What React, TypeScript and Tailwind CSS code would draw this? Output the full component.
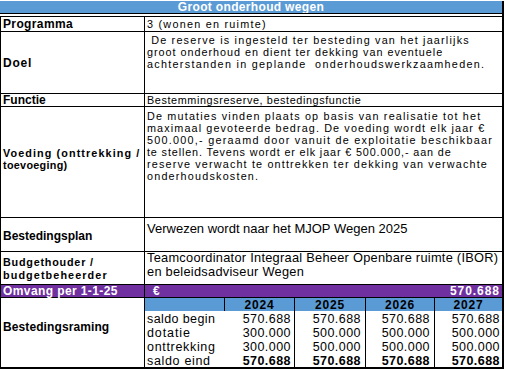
import React from "react";

const rows = [
  { label: "saldo begin", lt: "tracking-[0.4px]", vals: ["570.688", "570.688", "570.688", "570.688"], bold: false },
  { label: "dotatie", lt: "tracking-[0.9px]", vals: ["300.000", "500.000", "500.000", "500.000"], bold: false },
  { label: "onttrekking", lt: "tracking-[0.68px]", vals: ["300.000", "500.000", "500.000", "500.000"], bold: false },
  { label: "saldo eind", lt: "tracking-[0.67px]", vals: ["570.688", "570.688", "570.688", "570.688"], bold: true },
];

export default function App() {
  return (
    <div className="w-[505px] h-[371px] bg-white font-['Liberation_Sans',Arial,sans-serif] text-black overflow-hidden">
      <div className="w-[504px] flex flex-col">
        <div className="h-px" />
        <div className="h-[12px] bg-[#5b9bd5] border-r-2 border-black flex items-center justify-center text-white font-bold text-[12px] leading-[12px] tracking-[0.33px]">
          Groot onderhoud wegen
        </div>
        <div className="h-px bg-black" />
        <div className="h-[2px] bg-white border-r-2 border-black" />
        <div className="h-px bg-black" />

        <div className="flex flex-col border-l border-r-2 border-b-2 border-black">
          {/* Programma */}
          <div className="flex h-[15px] border-b border-black">
            <div className="w-[144px] border-r border-black flex items-center pl-[2px] font-bold text-[12px] leading-[12px] tracking-[0.37px]">
              Programma
            </div>
            <div className="flex-1 flex items-center pl-[2px] text-[10.8px] leading-[12px] tracking-[1.25px] whitespace-nowrap">
              3 (wonen en ruimte)
            </div>
          </div>

          {/* Doel */}
          <div className="flex h-[62px] border-b border-black">
            <div className="w-[144px] border-r border-black flex items-center pl-[2px] font-bold text-[12px] leading-[12px] tracking-[0.8px]">
              Doel
            </div>
            <div className="flex-1 flex flex-col pt-[2px] pl-[2px] text-[10.8px] leading-[12.1px] whitespace-pre">
              <span className="tracking-[1.2px]"> De reserve is ingesteld ter besteding van het jaarlijks</span>
              <span className="tracking-[0.99px]">groot onderhoud en dient ter dekking van eventuele</span>
              <span className="tracking-[1.29px]">achterstanden in geplande  onderhoudswerkzaamheden.</span>
            </div>
          </div>

          {/* Functie */}
          <div className="flex h-[13px] border-b border-black">
            <div className="w-[144px] border-r border-black flex items-center pl-[2px] font-bold text-[12px] leading-[12px]">
              Functie
            </div>
            <div className="flex-1 flex items-center pl-[2px] text-[10.8px] leading-[12px] tracking-[0.62px] whitespace-nowrap">
              Bestemmingsreserve, bestedingsfunctie
            </div>
          </div>

          {/* Voeding */}
          <div className="flex h-[111px] border-b border-black">
            <div className="w-[144px] border-r border-black flex flex-col justify-center pb-[6px] pl-[2px] font-bold text-[10.8px] leading-[12.1px] whitespace-nowrap">
              <span className="tracking-[1.1px]">Voeding (onttrekking /</span>
              <span className="tracking-[0.3px]">toevoeging)</span>
            </div>
            <div className="flex-1 flex flex-col pt-[3px] pl-[2px] text-[10.8px] leading-[12.1px] whitespace-pre">
              <span className="tracking-[1.18px]">De mutaties vinden plaats op basis van realisatie tot het</span>
              <span className="tracking-[1.12px]">maximaal gevoteerde bedrag. De voeding wordt elk jaar €</span>
              <span className="tracking-[1.26px]">500.000,- geraamd door vanuit de exploitatie beschikbaar</span>
              <span className="tracking-[0.87px]">te stellen. Tevens wordt er elk jaar € 500.000,- aan de</span>
              <span className="tracking-[1.16px]">reserve verwacht te onttrekken ter dekking van verwachte</span>
              <span className="tracking-[1.2px]">onderhoudskosten.</span>
            </div>
          </div>

          {/* Bestedingsplan */}
          <div className="flex h-[34px] border-b border-black">
            <div className="w-[144px] border-r border-black flex items-center pt-[3px] pl-[2px] font-bold text-[12px] leading-[12px]">
              Bestedingsplan
            </div>
            <div className="flex-1 pt-[3px] pl-[2px] text-[13px] leading-[15px] whitespace-nowrap">
              Verwezen wordt naar het MJOP Wegen 2025
            </div>
          </div>

          {/* Budgethouder */}
          <div className="flex h-[33px] border-b border-black">
            <div className="w-[144px] border-r border-black flex flex-col justify-center pt-[1px] pl-[2px] font-bold text-[10.8px] leading-[12.3px] whitespace-nowrap">
              <span className="tracking-[0.78px]">Budgethouder /</span>
              <span className="tracking-[1.1px]">budgetbeheerder</span>
            </div>
            <div className="flex-1 pl-[2px] text-[12.8px] leading-[14.4px] tracking-[0.27px] whitespace-nowrap">
              <div className="-mt-[1px] flex flex-col">
                <span>Teamcoordinator Integraal Beheer Openbare ruimte (IBOR)</span>
                <span>en beleidsadviseur Wegen</span>
              </div>
            </div>
          </div>

          {/* Omvang */}
          <div className="flex h-[13px] border-b border-black bg-[#7030a0] text-white font-bold">
            <div className="w-[144px] border-r border-black flex items-center pl-[2px] text-[12px] leading-[12px] tracking-[0.4px] whitespace-nowrap">
              Omvang per 1-1-25
            </div>
            <div className="flex-1 flex items-center justify-between pl-[8px] pr-[2px] text-[12px] leading-[12px] tracking-[0.95px]">
              <span>€</span>
              <span>570.688</span>
            </div>
          </div>

          {/* Bestedingsraming */}
          <div className="flex h-[69px]">
            <div className="w-[144px] border-r border-black flex items-center pb-[12px] pl-[2px] font-bold text-[12px] leading-[12px] tracking-[0.1px]">
              Bestedingsraming
            </div>
            <div className="flex-1 flex flex-col">
              <div className="flex h-[13px] bg-[#5b9bd5] font-bold text-[12px] leading-[12px] tracking-[0.8px]">
                <div className="w-[79px]" />
                <div className="w-[70px] border-l border-black flex items-center justify-center">2024</div>
                <div className="w-[71px] border-l border-black flex items-center justify-center">2025</div>
                <div className="w-[69px] border-l border-black flex items-center justify-center">2026</div>
                <div className="flex-1 border-l border-black flex items-center justify-center">2027</div>
              </div>
              {rows.map((r) => (
                <div key={r.label} className="flex h-[14px] text-[12.5px] leading-[12px]">
                  <div className={`w-[79px] pt-[2px] pl-[2px] whitespace-nowrap ${r.lt}`}>{r.label}</div>
                  <div className={`w-[70px] pl-px pt-[2px] pr-[3px] text-right tracking-[0.45px] ${r.bold ? "font-bold" : ""}`}>{r.vals[0]}</div>
                  <div className={`w-[71px] border-l border-black pt-[2px] pr-[4px] text-right tracking-[0.45px] ${r.bold ? "font-bold" : ""}`}>{r.vals[1]}</div>
                  <div className={`w-[69px] border-l border-black pt-[2px] pr-[4px] text-right tracking-[0.45px] ${r.bold ? "font-bold" : ""}`}>{r.vals[2]}</div>
                  <div className={`flex-1 border-l border-black pt-[2px] pr-[2px] text-right tracking-[0.45px] ${r.bold ? "font-bold" : ""}`}>{r.vals[3]}</div>
                </div>
              ))}
            </div>
          </div>
        </div>
      </div>
    </div>
  );
}
